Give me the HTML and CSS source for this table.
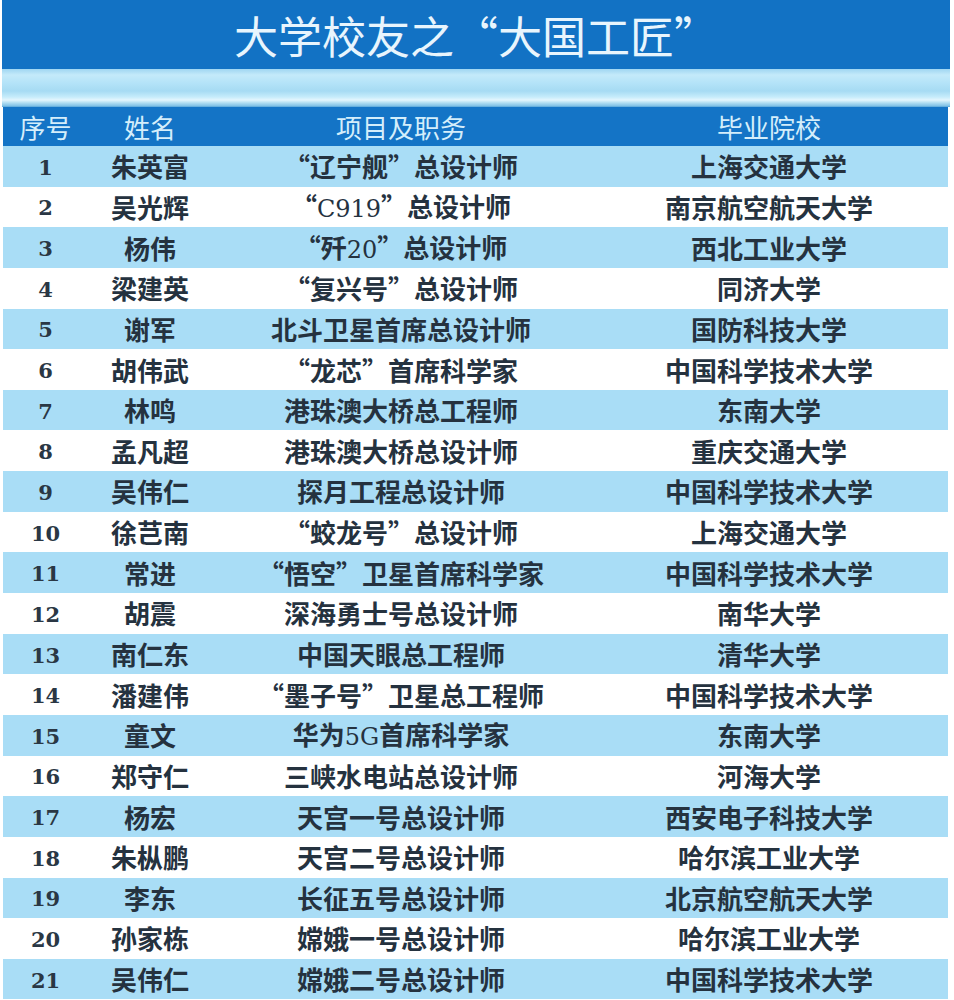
FILE: index.html
```html
<!DOCTYPE html>
<html lang="zh-CN">
<head>
<meta charset="utf-8">
<title>大学校友之“大国工匠”</title>
<link rel="stylesheet" href="styles.css">
</head>
<body>
<div class="page">
  <header class="title-bar"><h1>大学校友之“大国工匠”</h1></header>
  <div class="band"></div>
  <div class="table">
    <div class="row head"><span>序号</span><span>姓名</span><span>项目及职务</span><span>毕业院校</span></div>
    <div class="row odd"><span class="num">1</span><span>朱英富</span><span>“辽宁舰”总设计师</span><span>上海交通大学</span></div>
    <div class="row"><span class="num">2</span><span>吴光辉</span><span>“<i class="lat">C919</i>”总设计师</span><span>南京航空航天大学</span></div>
    <div class="row odd"><span class="num">3</span><span>杨伟</span><span>“歼<i class="lat">20</i>”总设计师</span><span>西北工业大学</span></div>
    <div class="row"><span class="num">4</span><span>梁建英</span><span>“复兴号”总设计师</span><span>同济大学</span></div>
    <div class="row odd"><span class="num">5</span><span>谢军</span><span>北斗卫星首席总设计师</span><span>国防科技大学</span></div>
    <div class="row"><span class="num">6</span><span>胡伟武</span><span>“龙芯”首席科学家</span><span>中国科学技术大学</span></div>
    <div class="row odd"><span class="num">7</span><span>林鸣</span><span>港珠澳大桥总工程师</span><span>东南大学</span></div>
    <div class="row"><span class="num">8</span><span>孟凡超</span><span>港珠澳大桥总设计师</span><span>重庆交通大学</span></div>
    <div class="row odd"><span class="num">9</span><span>吴伟仁</span><span>探月工程总设计师</span><span>中国科学技术大学</span></div>
    <div class="row"><span class="num">10</span><span>徐芑南</span><span>“蛟龙号”总设计师</span><span>上海交通大学</span></div>
    <div class="row odd"><span class="num">11</span><span>常进</span><span>“悟空”卫星首席科学家</span><span>中国科学技术大学</span></div>
    <div class="row"><span class="num">12</span><span>胡震</span><span>深海勇士号总设计师</span><span>南华大学</span></div>
    <div class="row odd"><span class="num">13</span><span>南仁东</span><span>中国天眼总工程师</span><span>清华大学</span></div>
    <div class="row"><span class="num">14</span><span>潘建伟</span><span>“墨子号”卫星总工程师</span><span>中国科学技术大学</span></div>
    <div class="row odd"><span class="num">15</span><span>童文</span><span>华为<i class="lat">5G</i>首席科学家</span><span>东南大学</span></div>
    <div class="row"><span class="num">16</span><span>郑守仁</span><span>三峡水电站总设计师</span><span>河海大学</span></div>
    <div class="row odd"><span class="num">17</span><span>杨宏</span><span>天宫一号总设计师</span><span>西安电子科技大学</span></div>
    <div class="row"><span class="num">18</span><span>朱枞鹏</span><span>天宫二号总设计师</span><span>哈尔滨工业大学</span></div>
    <div class="row odd"><span class="num">19</span><span>李东</span><span>长征五号总设计师</span><span>北京航空航天大学</span></div>
    <div class="row"><span class="num">20</span><span>孙家栋</span><span>嫦娥一号总设计师</span><span>哈尔滨工业大学</span></div>
    <div class="row odd"><span class="num">21</span><span>吴伟仁</span><span>嫦娥二号总设计师</span><span>中国科学技术大学</span></div>
  </div>
</div>
</body>
</html>
```

FILE: styles.css
```css
html, body {
  margin: 0;
  padding: 0;
  background: #ffffff;
}
body {
  font-family: "Noto Sans CJK SC", "Noto Sans", sans-serif;
  overflow: hidden;
}
.page {
  width: 954px;
  height: 1000px;
  overflow: hidden;
}
.title-bar {
  margin: 0 4px 0 2px;
  height: 69px;
  background: #1272c4;
  display: flex;
  align-items: center;
  justify-content: center;
}
.title-bar h1 {
  margin: 0;
  font-size: 44px;
  font-weight: 400;
  color: #e8f5fd;
  letter-spacing: 0;
  line-height: 1;
}
.band {
  margin: 0 4px 0 2px;
  height: 38px;
  background: linear-gradient(to bottom,
    #9fd6f2 0px,
    #c4eafa 6px,
    #b4e3f8 14px,
    #a6dbf3 22px,
    #c6ecfb 28px,
    #e4f6fd 31px,
    #aedcf2 34px,
    #7fc0e6 37px,
    #4f9fd6 38px);
}
.table {
  margin: 0 6px 0 3px;
}
.row {
  display: grid;
  grid-template-columns: 85px 124px 378px 1fr;
  height: 40.65px;
  align-items: center;
  color: #25323f;
  font-size: 26px;
  font-weight: 700;
}
.row span {
  text-align: center;
  white-space: nowrap;
  line-height: 1;
}
.row.head {
  height: 39px;
  background: #1474c6;
  color: #d4eefb;
  font-weight: 400;
  font-size: 26px;
}
.row.odd {
  background: #a9ddf6;
}
.row .num {
  font-family: "DejaVu Serif", "Liberation Serif", serif;
  font-weight: 700;
  font-size: 21px;
  color: #2a3744;
  padding-top: 2px;
}
.lat {
  font-style: normal;
  font-family: "DejaVu Serif", "Liberation Serif", serif;
  font-weight: 400;
  font-size: 24px;
}
```
